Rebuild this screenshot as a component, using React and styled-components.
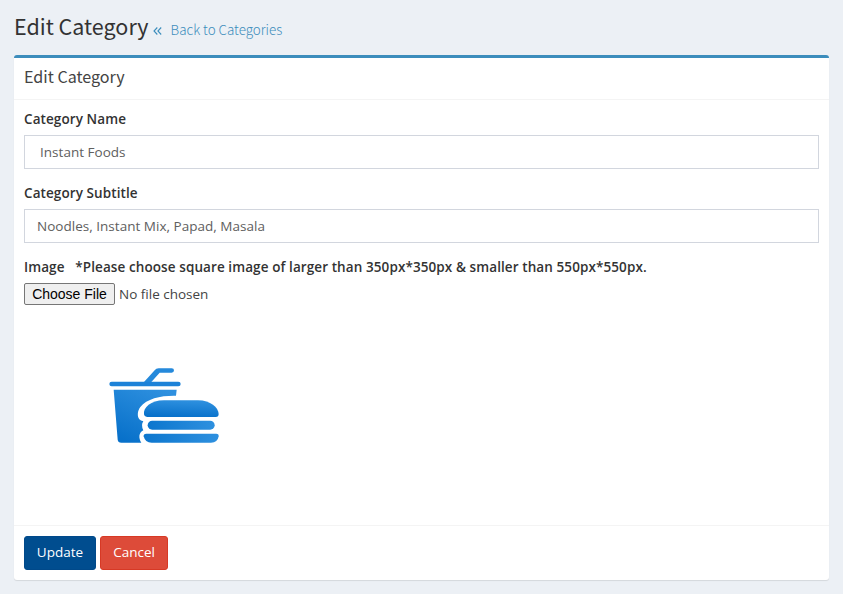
import React from "react";
import styled, { createGlobalStyle } from "styled-components";

const heading = '"Noto Sans CJK SC", "Open Sans", sans-serif';
const body = '"Open Sans", "Noto Sans", sans-serif';

const GlobalStyle = createGlobalStyle`
  * { box-sizing: border-box; }
  body { margin: 0; background: #ecf0f5; color: #333; font: 400 13.5px/20px ${body}; }
`;

const Page = styled.main`
  height: 594px;
  padding: 14px 14px 14px;
`;

const PageHeader = styled.header`
  display: flex;
  align-items: baseline;
  height: 41px;
  white-space: nowrap;
`;

const PageTitle = styled.h1`
  margin: 0;
  font: 400 21.5px/24px ${heading};
`;

const BackLink = styled.a`
  display: flex;
  align-items: baseline;
  gap: 9px;
  margin-left: 4px;
  color: #3c8dbc;
  font: 300 13.4px/15px ${heading};
  text-decoration: none;
`;

const Chevrons = styled.svg`
  width: 9px;
  height: 8px;
  fill: none;
  stroke: currentColor;
  stroke-width: 1.1;
`;

const Box = styled.section`
  height: 525px;
  display: flex;
  flex-direction: column;
  background: #fff;
  border-top: 3px solid #3c8dbc;
  border-radius: 3px;
  box-shadow: 0 1px 1px rgba(0, 0, 0, 0.1);
`;

const BoxHeader = styled.div`
  height: 42px;
  padding: 9px 10px 11px;
  border-bottom: 1px solid #f4f4f4;
`;

const BoxTitle = styled.h3`
  margin: 0;
  color: #444;
  font: 400 16.1px/18px ${heading};
`;

const BoxBody = styled.div`
  flex: 1;
  padding: 9px 10px 10px;
`;

const Field = styled.div`
  height: 74px;
`;

const Label = styled.label`
  display: block;
  height: 26px;
  font-weight: 600;
  letter-spacing: 0.09px;
  line-height: 20px;
  white-space: pre;
`;

const TextInput = styled.input`
  display: block;
  width: 100%;
  height: 34px;
  padding: 6px 12px 6px ${(p) => p.$indent}px;
  border: 1px solid #d2d6de;
  border-radius: 0;
  background: #fff;
  color: #606060;
  font: 400 13.5px/20px ${body};
  letter-spacing: 0.02px;
  outline: none;
`;

const FileRow = styled.div`
  display: flex;
  align-items: center;
  gap: 4px;
  height: 22px;
  color: #444;
`;

const FileButton = styled.button`
  width: 91px;
  height: 22px;
  padding: 0;
  border: 1px solid #767676;
  border-radius: 2px;
  background: #efefef;
  color: #000;
  font: 14px/18px "Liberation Sans", Arial, sans-serif;
`;

const Preview = styled.svg`
  display: block;
  width: 130px;
  height: 90px;
  margin: 55px 0 0 76px;
`;

const BoxFooter = styled.div`
  display: flex;
  gap: 4px;
  height: 55px;
  padding: 10px;
  border-top: 1px solid #f4f4f4;
`;

const ActionButton = styled.button`
  width: ${(p) => p.$width}px;
  height: 34px;
  padding: 0 0 2px;
  border: 1px solid ${(p) => p.$border};
  border-radius: 3px;
  background: ${(p) => p.$color};
  color: #fff;
  font: 400 13.5px/20px ${body};
`;

function FoodPicture() {
  return (
    <Preview viewBox="0 0 390 270" role="img" aria-label="Instant Foods">
      <defs>
        <linearGradient id="cup" x1="0.8" y1="0" x2="0.25" y2="1">
          <stop offset="0" stopColor="#2e90df" />
          <stop offset="1" stopColor="#0871ca" />
        </linearGradient>
        <linearGradient id="bun" x1="0.6" y1="0" x2="0.4" y2="1">
          <stop offset="0" stopColor="#2e90df" />
          <stop offset="1" stopColor="#0871ca" />
        </linearGradient>
        <linearGradient id="layer">
          <stop offset="0" stopColor="#0c76ce" />
          <stop offset="1" stopColor="#2e90df" />
        </linearGradient>
      </defs>
      <path d="M132 66 164 31Q168 25 176 25H215Q222 25 222 31Q222 38 215 38H179L154 66Z" fill="#2589db" />
      <rect x="28" y="65" width="214" height="14" rx="7" fill="#1c82d8" />
      <path d="M41 89H230L228 107C184 106 141 115 121 141C112 153 111 169 118 178Q122 183 130 184Q122 195 130 211C116 217 115 235 124 248H64Q54 248 53 239Z" fill="url(#cup)" />
      <path d="M132 163C129 143 152 121 192 121H294C332 121 355 143 356 162Q356 171 347 171H143Q134 171 132 163Z" fill="url(#bun)" />
      <rect x="143" y="182" width="201" height="27" rx="13.5" fill="url(#layer)" />
      <path d="M139 221H349Q357 221 356 229Q353 248 333 248H155Q135 248 131 229Q130 221 139 221Z" fill="url(#layer)" />
    </Preview>
  );
}

export default function App() {
  return (
    <>
      <GlobalStyle />
      <Page>
        <PageHeader>
          <PageTitle>Edit Category</PageTitle>
          <BackLink href="#">
            <Chevrons viewBox="0 0 9 8" aria-hidden="true">
              <path d="M4.3.5 1 4l3.3 3.5M8.2.5 4.9 4l3.3 3.5" />
            </Chevrons>
            <span>Back to Categories</span>
          </BackLink>
        </PageHeader>
        <Box>
          <BoxHeader>
            <BoxTitle>Edit Category</BoxTitle>
          </BoxHeader>
          <BoxBody>
            <Field>
              <Label htmlFor="name">Category Name</Label>
              <TextInput id="name" $indent={15} defaultValue="Instant Foods" />
            </Field>
            <Field>
              <Label htmlFor="subtitle">Category Subtitle</Label>
              <TextInput id="subtitle" $indent={12} defaultValue="Noodles, Instant Mix, Papad, Masala" />
            </Field>
            <Label as="div">{"Image   *Please choose square image of larger than 350px*350px & smaller than 550px*550px."}</Label>
            <FileRow>
              <FileButton type="button">Choose File</FileButton>
              <span>No file chosen</span>
            </FileRow>
            <FoodPicture />
          </BoxBody>
          <BoxFooter>
            <ActionButton $width={72} $color="#004d8f" $border="#00498a">Update</ActionButton>
            <ActionButton $width={68} $color="#dd4b39" $border="#d73925">Cancel</ActionButton>
          </BoxFooter>
        </Box>
      </Page>
    </>
  );
}
